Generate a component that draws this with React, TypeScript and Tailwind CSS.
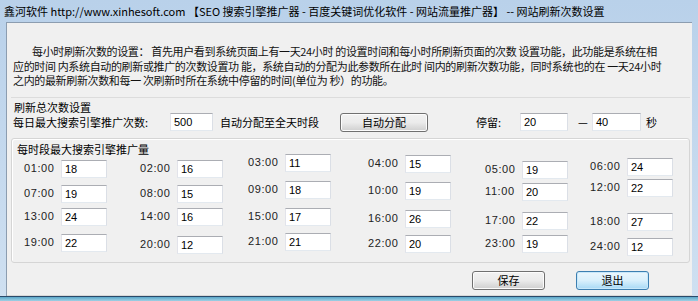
import React from 'react'

interface Slot {
  time: string
  value: string
  dy: number
}

const rows: Slot[][] = [
  [
    { time: '01:00', value: '18', dy: 0 },
    { time: '02:00', value: '16', dy: 0 },
    { time: '03:00', value: '11', dy: -6 },
    { time: '04:00', value: '15', dy: -5 },
    { time: '05:00', value: '19', dy: 1 },
    { time: '06:00', value: '24', dy: -2 },
  ],
  [
    { time: '07:00', value: '19', dy: 0 },
    { time: '08:00', value: '15', dy: 0 },
    { time: '09:00', value: '18', dy: -4 },
    { time: '10:00', value: '19', dy: -3 },
    { time: '11:00', value: '20', dy: -2 },
    { time: '12:00', value: '22', dy: -6 },
  ],
  [
    { time: '13:00', value: '24', dy: 0 },
    { time: '14:00', value: '16', dy: 0 },
    { time: '15:00', value: '17', dy: 0 },
    { time: '16:00', value: '26', dy: 2 },
    { time: '17:00', value: '22', dy: 4 },
    { time: '18:00', value: '27', dy: 5 },
  ],
  [
    { time: '19:00', value: '22', dy: 0 },
    { time: '20:00', value: '12', dy: 2 },
    { time: '21:00', value: '21', dy: -1 },
    { time: '22:00', value: '20', dy: 1 },
    { time: '23:00', value: '19', dy: 1 },
    { time: '24:00', value: '12', dy: 4 },
  ],
]

const rowHeights = ['h-[25px]', 'h-[23px]', 'h-[26px]', 'h-[18px]']

const font = { fontFamily: '"Noto Sans CJK SC", "Liberation Sans", sans-serif' }
const latin = { fontFamily: '"Liberation Sans", sans-serif' }

function Field({ value, className = '' }: { value: string; className?: string }) {
  return (
    <div
      className={
        'h-[18px] shrink-0 bg-white border border-t-[#abadb3] border-l-[#e2e3ea] border-r-[#dbdfe6] border-b-[#e3e9ef] pl-[3px] text-[11px] leading-[16px] text-black ' +
        className
      }
      style={latin}
    >
      {value}
    </div>
  )
}

function Button({ label, active }: { label: string; active?: boolean }) {
  return (
    <div
      className={
        'h-[19px] rounded-[3px] border flex items-center justify-center text-[11px] text-black bg-gradient-to-b ' +
        (active
          ? 'border-[#3c7fb1] from-[#eaf6fd] via-[#d9f0fc] to-[#a7d9f5] shadow-[inset_0_0_0_1px_#c8e8fa]'
          : 'border-[#707070] from-[#f2f2f2] via-[#ebebeb] to-[#cfcfcf] shadow-[inset_0_0_0_1px_#fcfcfc]')
      }
    >
      {label}
    </div>
  )
}

export default function App() {
  return (
    <div
      className="w-[698px] h-[301px] overflow-hidden bg-gradient-to-b from-[#b9d1ea] to-[#cfe0f1] flex flex-col text-black"
      style={font}
    >
      {/* title bar */}
      <div className="h-[22px] shrink-0 flex items-center pl-[4px] text-[11px] whitespace-nowrap text-black">
        鑫河软件 http://www.xinhesoft.com 【SEO 搜索引擎推广器 - 百度关键词优化软件 - 网站流量推广器】 -- 网站刷新次数设置
      </div>

      <div className="flex-1 flex pl-[6px] pr-[6px]">
        <div className="flex-1 bg-[#f0f0f0] border-l border-t border-[#8c9db0] flex flex-col">
          {/* description */}
          <div className="pt-[21px] pl-[6px] text-[11px] leading-[14.5px] tracking-[-0.35px] whitespace-nowrap text-[#111]">
            <div className="pl-[19px]">
              每小时刷新次数的设置： 首先用户看到系统页面上有一天24小时 的设置时间和每小时所刷新页面的次数 设置功能，此功能是系统在相
            </div>
            <div>
              应的时间 内系统自动的刷新或推广的次数设置功 能，系统自动的分配为此参数所在此时 间内的刷新次数功能，同时系统也的在 一天24小时
            </div>
            <div>之内的最新刷新次数和每一 次刷新时所在系统中停留的时间(单位为 秒）的功能。</div>
          </div>

          {/* total group */}
          <div className="mt-[9px] ml-[4px] mr-[2px] h-[41px] shrink-0 border-t border-[#dcdcdc] flex flex-col">
            <div className="pl-[3px] pt-[2px] text-[11px] leading-[14px]">刷新总次数设置</div>
            <div className="flex items-center text-[11px] pl-[2px] mt-[-1px]">
              <span className="w-[157px] shrink-0">每日最大搜索引擎推广次数:</span>
              <Field value="500" className="w-[43px]" />
              <span className="ml-[7px] w-[120px] shrink-0">自动分配至全天时段</span>
              <div className="w-[88px] shrink-0">
                <Button label="自动分配" />
              </div>
              <span className="ml-[48px] w-[44px] shrink-0">停留:</span>
              <Field value="20" className="w-[48px]" />
              <span className="ml-[10px] w-[12px] shrink-0">—</span>
              <Field value="40" className="ml-[2px] w-[49px]" />
              <span className="ml-[5px]">秒</span>
            </div>
          </div>

          {/* per-hour group */}
          <div className="ml-[4px] mr-[2px] h-[125px] shrink-0 border border-[#d5d5d5] rounded-[3px] shadow-[inset_1px_1px_0_#fff] flex flex-col">
            <div className="pl-[5px] pt-[3px] text-[11px] leading-[14px]">每时段最大搜索引擎推广量</div>
            <div className="mt-[4px] flex flex-col">
              {rows.map((row, ri) => (
                <div
                  key={ri}
                  className={'grid grid-cols-[116px_108px_120px_117px_105px_90px] pl-[12px] ' + rowHeights[ri]}
                >
                  {row.map((s) => (
                    <div key={s.time} className="flex items-center h-[18px]" style={{ marginTop: s.dy }}>
                      <span className="w-[37px] shrink-0 text-[11px] tracking-[0.6px] text-[#222]" style={latin}>
                        {s.time}
                      </span>
                      <Field value={s.value} className="w-[46px]" />
                    </div>
                  ))}
                </div>
              ))}
            </div>
          </div>

          {/* buttons */}
          <div className="flex justify-end gap-[31px] pr-[43px] mt-[8px]">
            <div className="w-[73px]">
              <Button label="保存" />
            </div>
            <div className="w-[73px]">
              <Button label="退出" active />
            </div>
          </div>
          <div className="flex-1" />
          <div className="h-[1px] bg-[#d9d9d9]" />
        </div>
      </div>
      <div className="h-[5px] shrink-0 border-t border-[#2a4a6a] bg-gradient-to-b from-[#5aa7c9] to-[#9fd0e4]" />
    </div>
  )
}
